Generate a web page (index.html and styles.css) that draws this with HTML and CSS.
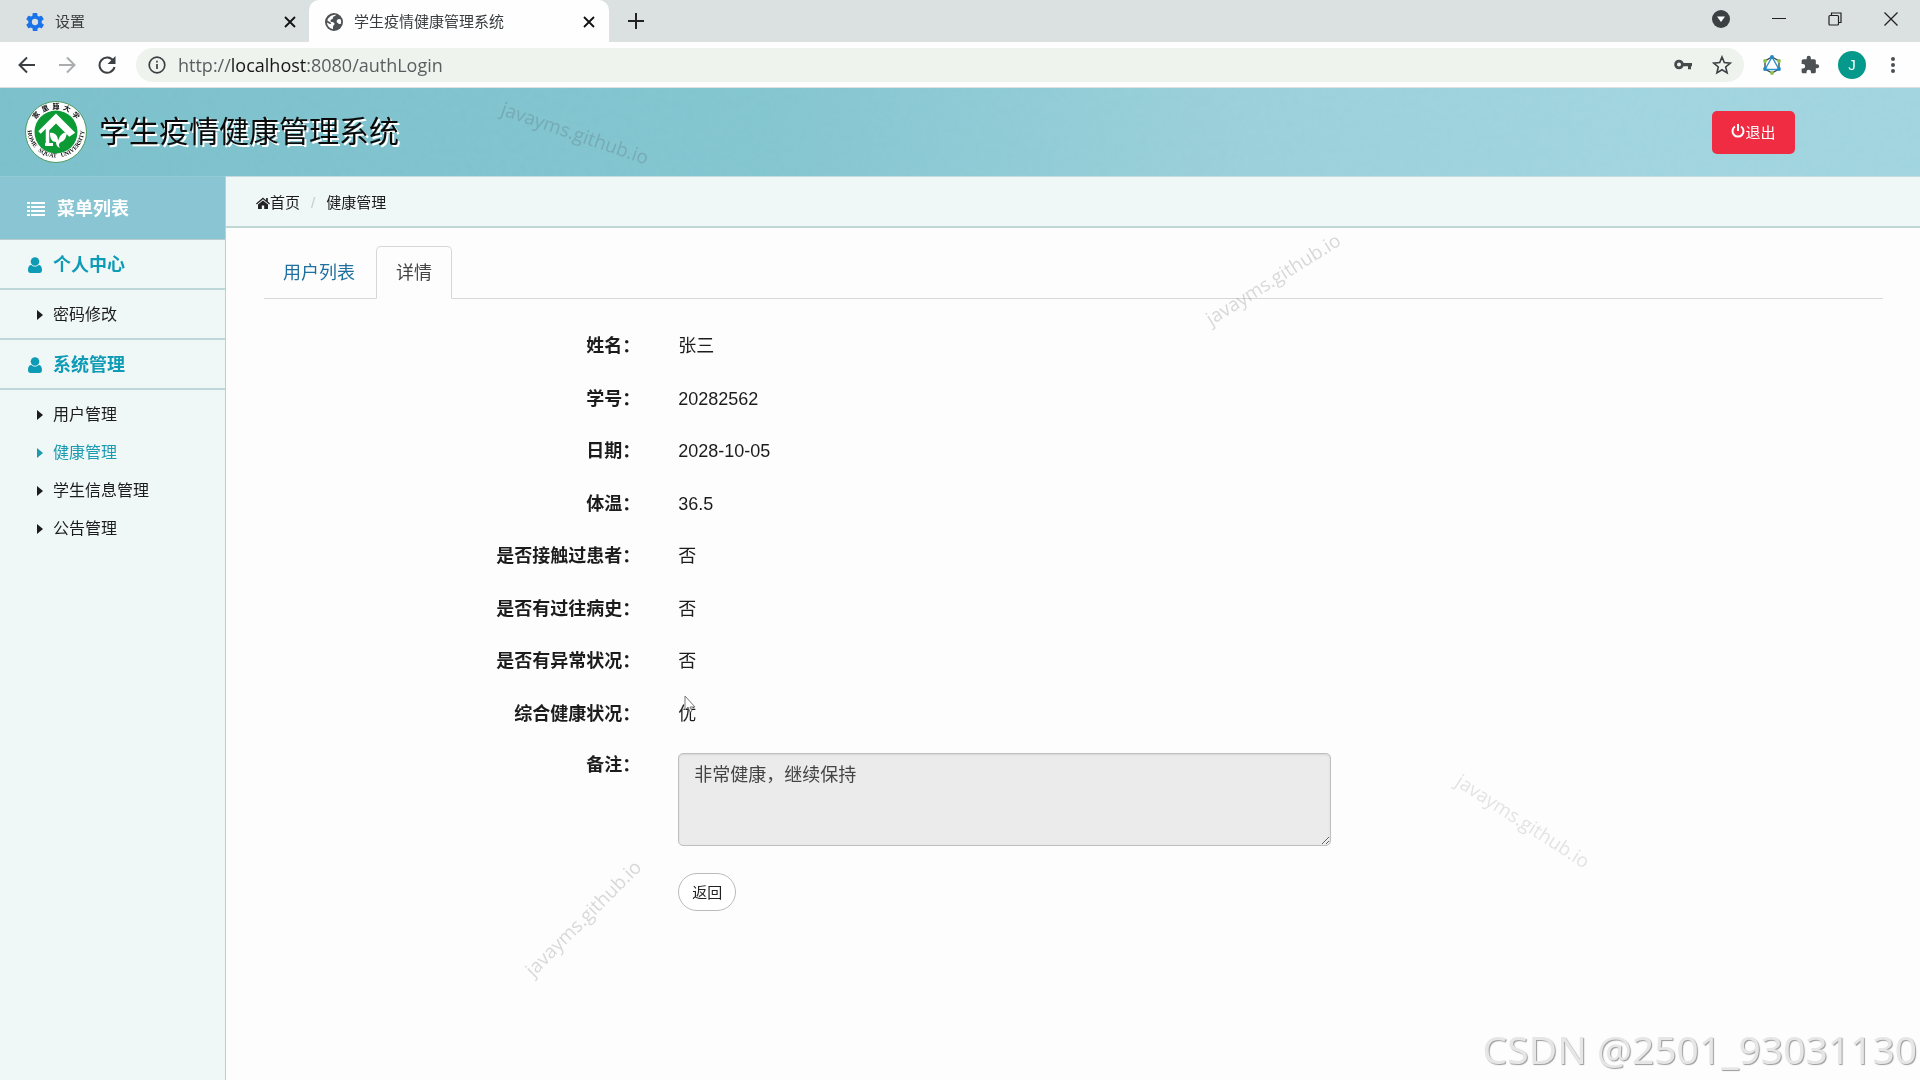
FILE: index.html
```html
<!DOCTYPE html>
<html lang="zh-CN">
<head>
<meta charset="utf-8">
<title>学生疫情健康管理系统</title>
<link rel="stylesheet" href="styles.css">
</head>
<body>
<div class="browser">
  <div class="tabstrip">
    <div class="btab btab-first">
      <svg class="icon18" viewBox="2 2 20 20" fill="#1a73e8"><path d="M19.400 13c0-.3.1-.6.1-1s0-.7-.1-1l2.100-1.700c.2-.1.2-.4.1-.6l-2-3.500c-.1-.2-.4-.3-.6-.2l-2.500 1c-.5-.4-1.100-.7-1.700-1l-.4-2.600c0-.2-.2-.4-.5-.4h-4c-.2 0-.5.2-.5.4L9.200 5c-.6.3-1.200.6-1.700 1L5 5c-.2-.1-.5 0-.6.2l-2 3.500c-.1.2-.1.500.1.600L4.600 11a8 8 0 0 0 0 2l-2.100 1.700c-.2.1-.2.4-.1.6l2 3.500c.1.2.4.3.6.2l2.500-1c.5.4 1.100.7 1.700 1l.4 2.600c0 .2.200.4.500.4h4c.2 0 .5-.2.5-.4l.4-2.600c.6-.3 1.200-.6 1.700-1l2.500 1c.2.100.5 0 .6-.2l2-3.500c.1-.2.100-.5-.1-.6zM12 15.500a3.500 3.500 0 1 1 0-7 3.500 3.500 0 0 1 0 7z"/></svg>
      <span class="btab-title">设置</span>
      <button class="plain" aria-label="关闭标签"><svg class="icon12" viewBox="0 0 12 12" stroke="#111" stroke-width="1.800"><path d="M1 1l10 10M11 1L1 11"/></svg></button>
    </div>
    <div class="btab btab-active">
      <svg class="icon18" viewBox="0 0 18 18"><circle cx="9" cy="9" r="9" fill="#4d5153"/><path d="M11 1.800C10.500 3.500 8 3 8 5c0 1.500-2.500 1-2.500 3 0 1.500 3.500.5 4 2.500.3 1.500-1.500 1.500-1.500 3.500v2C4.500 15.500 2 12.500 2 9.500l3 1.500c1 .5 1.500-1 .5-1.500L2.300 7.500C3.200 4.500 6.500 1.500 11 1.800zM12.500 6.500c1-.8 2.500-.8 3.300 0 .5 1.500.5 3 0 4.500-1.300.3-2.300-.3-3-1-1.300-.5-1.500-2.500-.3-3.500z" fill="#fdfefd"/></svg>
      <span class="btab-title">学生疫情健康管理系统</span>
      <button class="plain" aria-label="关闭标签"><svg class="icon12" viewBox="0 0 12 12" stroke="#111" stroke-width="1.800"><path d="M1 1l10 10M11 1L1 11"/></svg></button>
    </div>
    <button class="plain newtab" aria-label="新标签页"><svg class="icon16" viewBox="0 0 16 16" stroke="#222" stroke-width="2"><path d="M8 0v16M0 8h16"/></svg></button>
    <div class="wincontrols">
      <button class="plain" aria-label="标签搜索"><svg class="icon18" viewBox="0 0 18 18"><circle cx="9" cy="9" r="9" fill="#3b4043"/><path d="M5 6.500h8L9 12z" fill="#fff"/></svg></button>
      <button class="plain" aria-label="最小化"><svg class="icon14" viewBox="0 0 14 14" stroke="#222"><path d="M0 6.500h14"/></svg></button>
      <button class="plain" aria-label="还原"><svg class="icon14" viewBox="0 0 14 14" fill="none" stroke="#222" stroke-width="1.200"><rect x="1" y="3.500" width="9.500" height="9.500" rx="1"/><path d="M3.500 3V1H13v9.500h-2"/></svg></button>
      <button class="plain" aria-label="关闭"><svg class="icon14" viewBox="0 0 14 14" stroke="#222" stroke-width="1.300"><path d="M.5.5l13 13M13.500.5l-13 13"/></svg></button>
    </div>
  </div>
  <div class="toolbar">
    <button class="plain" aria-label="后退"><svg class="icon18" viewBox="0 0 18 18" fill="none" stroke="#3c4043" stroke-width="2"><path d="M17 9H2M9 1.500L1.500 9 9 16.500"/></svg></button>
    <button class="plain" aria-label="前进"><svg class="icon18" viewBox="0 0 18 18" fill="none" stroke="#a9adaf" stroke-width="2"><path d="M1 9h15M9 1.500L16.500 9 9 16.500"/></svg></button>
    <button class="plain" aria-label="刷新"><svg class="icon18" viewBox="0 0 18 18"><path d="M15.500 5A7.600 7.600 0 1 0 16.500 11" fill="none" stroke="#3c4043" stroke-width="2"/><path d="M17.500 0v8h-8z" fill="#3c4043"/></svg></button>
    <div class="omnibox">
      <svg class="icon18" viewBox="0 0 18 18" fill="none" stroke="#3c4043" stroke-width="1.700"><circle cx="9" cy="9" r="7.800"/><path d="M9 8v5M9 4.800v1.800"/></svg>
      <div class="url">http://<span class="host">localhost</span>:8080/authLogin</div>
      <button class="plain" aria-label="密码"><svg class="icon18" viewBox="0 0 18 18"><circle cx="5" cy="8.500" r="3.400" fill="none" stroke="#45494b" stroke-width="2.800"/><path d="M9 7h9v3.200h-1v3h-3v-3H9z" fill="#45494b"/></svg></button>
      <button class="plain" aria-label="收藏"><svg class="icon20" viewBox="0 0 20 20" fill="none" stroke="#3c4043" stroke-width="1.600"><path d="M10 2l2.300 5.600 6 .5-4.600 3.900 1.400 5.900L10 14.800l-5.100 3.100L6.300 12 1.700 8.100l6-.5z"/></svg></button>
    </div>
    <div class="extensions">
      <button class="plain" aria-label="扩展程序"><svg class="icon20" viewBox="0 0 20 20" fill="none"><path d="M10 2l7 4v8l-7 4-7-4V6z" stroke="#3f4a54" stroke-width="1.400"/><path d="M10 2L3 14.500h14z" fill="#fff" stroke="#2a93cf" stroke-width="1.400"/><g fill="#1e88c9"><circle cx="10" cy="2" r="1.900"/><circle cx="3" cy="14" r="1.900"/><circle cx="17" cy="14" r="1.900"/></g><g fill="#8bc34a"><circle cx="3" cy="6" r="1.900"/><circle cx="17" cy="6" r="1.900"/><circle cx="10" cy="18" r="1.900"/></g></svg></button>
      <button class="plain" aria-label="扩展"><svg class="icon20" viewBox="0 0 24 24" fill="#4d5153"><path d="M20.500 11H19V7a2 2 0 0 0-2-2h-4V3.500a2.500 2.500 0 0 0-5 0V5H4a2 2 0 0 0-2 2v3.800h1.500a2.700 2.700 0 0 1 0 5.400H2V20c0 1.100.9 2 2 2h3.800v-1.500a2.700 2.700 0 0 1 5.400 0V22H17a2 2 0 0 0 2-2v-4h1.500a2.500 2.500 0 0 0 0-5z"/></svg></button>
      <button class="avatar" aria-label="账户">J</button>
      <button class="plain" aria-label="菜单"><svg class="icon18" viewBox="0 0 18 18" fill="#4d5153"><circle cx="9" cy="3" r="2"/><circle cx="9" cy="9" r="2"/><circle cx="9" cy="15" r="2"/></svg></button>
    </div>
  </div>
</div>

<header class="header">
  <svg class="grain" aria-hidden="true">
    <filter id="grain"><feTurbulence type="fractalNoise" baseFrequency="0.15" numOctaves="3" seed="4"/><feColorMatrix type="saturate" values="0"/></filter>
    <rect width="100%" height="100%" filter="url(#grain)"/>
  </svg>
  <svg class="logo" viewBox="0 0 62 62">
    <defs>
      <path id="arcTop" d="M7.500 31a23.500 23.500 0 0 1 47 0"/>
      <path id="arcBottom" d="M2.500 28a28.500 28.500 0 0 0 57 0"/>
    </defs>
    <circle cx="31" cy="31" r="30.500" fill="#fff" stroke="#4b9b62" stroke-width="1"/>
    <circle cx="31" cy="31" r="21.500" fill="#0c9a35"/>
    <text class="logo-cn"><textPath href="#arcTop" startOffset="50%" text-anchor="middle">家&#160; 里&#160; 蹲&#160; 大&#160; 学</textPath></text>
    <text class="logo-en"><textPath href="#arcBottom" startOffset="50%" text-anchor="middle">HOME&#160; &#160;SQUAT&#160; &#160;UNIVERSITY</textPath></text>
    <path d="M14.500 31.500L31 15l16.500 16.500-3 2L31 20l-8.500 8.500V43" fill="none" stroke="#fff" stroke-width="3.500"/>
    <path d="M25 32c5-1 8 3 8 8 2-6 4-8 9-9-1 7-3 9-6 10-3 2-2 4-1 6-3-1-4-3-4-6-4 0-6-3-6-9z" fill="#fff"/>
    <path d="M20 43.500h8" stroke="#fff" stroke-width="3"/>
  </svg>
  <h1 class="title">学生疫情健康管理系统</h1>
  <button class="logout"><svg class="icon14" viewBox="0 0 14 14" fill="none" stroke="#fff" stroke-width="2"><path d="M4 2.500a5.500 5.500 0 1 0 6 0M7 0v7"/></svg>退出</button>
</header>

<div class="layout">
  <nav class="sidebar">
    <div class="side-title"><svg class="icon18" viewBox="0 0 18 18" fill="#fff"><path d="M0 2h3v2H0zM4 2h14v2H4zM0 6h3v2H0zM4 6h14v2H4zM0 10h3v2H0zM4 10h14v2H4zM0 14h3v2H0zM4 14h14v2H4z"/></svg>菜单列表</div>
    <h2 class="side-head"><svg class="icon16" viewBox="0 0 16 16" fill="#0e9bb5"><circle cx="8" cy="4.500" r="4.300"/><path d="M1 13c0-3 1-5 3.500-5 2 2 5 2 7 0C14 8 15 10 15 13c0 2-1 3-2.500 3h-9C2 16 1 15 1 13z"/></svg>个人中心</h2>
    <ul class="side-list side-list-ruled">
      <li><a href="#password">密码修改</a></li>
    </ul>
    <h2 class="side-head"><svg class="icon16" viewBox="0 0 16 16" fill="#0e9bb5"><circle cx="8" cy="4.500" r="4.300"/><path d="M1 13c0-3 1-5 3.500-5 2 2 5 2 7 0C14 8 15 10 15 13c0 2-1 3-2.500 3h-9C2 16 1 15 1 13z"/></svg>系统管理</h2>
    <ul class="side-list">
      <li><a href="#users">用户管理</a></li>
      <li><a class="current" href="#health">健康管理</a></li>
      <li><a href="#students">学生信息管理</a></li>
      <li><a href="#notices">公告管理</a></li>
    </ul>
  </nav>

  <main class="main">
    <div class="breadcrumb">
      <a href="#home"><svg class="icon14" viewBox="0 0 14 14" fill="#222"><path d="M7 1.500L0 7.500l.8 1L7 3.300l6.200 5.200.8-1-2.200-1.900V2h-1.700v2.200z"/><path d="M7 4.400L2 8.500V13h3.800V9.500h2.400V13H12V8.500z"/></svg>首页</a>
      <span class="slash">/</span>
      <a href="#health">健康管理</a>
    </div>
    <div class="content">
      <div class="tabs">
        <a class="tab" href="#list">用户列表</a>
        <a class="tab tab-active" href="#detail">详情</a>
      </div>
      <form class="form">
        <dl class="fields">
          <div class="row"><dt>姓名：</dt><dd>张三</dd></div>
          <div class="row"><dt>学号：</dt><dd>20282562</dd></div>
          <div class="row"><dt>日期：</dt><dd>2028-10-05</dd></div>
          <div class="row"><dt>体温：</dt><dd>36.5</dd></div>
          <div class="row"><dt>是否接触过患者：</dt><dd>否</dd></div>
          <div class="row"><dt>是否有过往病史：</dt><dd>否</dd></div>
          <div class="row"><dt>是否有异常状况：</dt><dd>否</dd></div>
          <div class="row"><dt>综合健康状况：</dt><dd>优</dd></div>
        </dl>
        <div class="row row-note">
          <label class="label" for="note">备注：</label>
          <div class="control"><textarea id="note" class="note" readonly>非常健康，继续保持</textarea></div>
        </div>
        <div class="row row-actions">
          <div class="label"></div>
          <div class="control"><button type="button" class="back">返回</button></div>
        </div>
      </form>
    </div>
  </main>
</div>

<div class="overlay">
  <span class="mark mark-a">javayms.github.io</span>
  <span class="mark mark-b">javayms.github.io</span>
  <span class="mark mark-c">javayms.github.io</span>
  <span class="mark mark-d">javayms.github.io</span>
  <svg class="pointer" viewBox="0 0 12 18"><path d="M1 1v14l3-3 2 5 2-1-2-4h5z" fill="#fff" stroke="#777"/></svg>
  <span class="credit">CSDN @2501_93031130</span>
</div>
</body>
</html>
```
FILE: styles.css
```css
* { box-sizing: border-box; }
body {
  margin: 0;
  min-height: 100vh;
  display: flex;
  flex-direction: column;
  position: relative;
  overflow-x: hidden;
  background: #fdfdfd;
  color: #1c1c1c;
  font: 16px/24px "Liberation Sans", "Noto Sans CJK SC", sans-serif;
}
h1, h2, ul, dl, dd { margin: 0; padding: 0; }
ul { list-style: none; }
a { color: inherit; text-decoration: none; }
svg { display: block; flex: none; }
button { font-family: inherit; }
.plain { padding: 0; border: 0; background: none; }
.icon12 { width: 12px; height: 12px; }
.icon14 { width: 14px; height: 14px; }
.icon16 { width: 16px; height: 16px; }
.icon18 { width: 18px; height: 18px; }
.icon20 { width: 20px; height: 20px; }

/* Browser frame */
.tabstrip { display: flex; height: 42px; background: #dbe0e1; }
.btab { display: flex; align-items: center; gap: 11px; width: 300px; padding: 1px 14px 0 16px; }
.btab-first { width: 309px; padding-left: 26px; padding-right: 13px; }
.btab-active { background: #fdfefd; border-radius: 10px 10px 0 0; }
.btab-title { flex: 1; font-size: 15px; color: #3a3d3f; }
.newtab { margin-left: 19px; }
.wincontrols { display: flex; align-items: center; gap: 42px; margin-left: auto; padding: 0 22px 4px 0; }
.toolbar {
  display: flex;
  align-items: center;
  gap: 22px;
  height: 46px;
  padding: 0 18px;
  background: #fdfefd;
  border-bottom: 1px solid #dde0df;
}
.omnibox {
  flex: 1;
  display: flex;
  align-items: center;
  gap: 20px;
  height: 34px;
  margin-left: -2px;
  padding: 0 12px;
  border-radius: 17px;
  background: #eef3ee;
}
.url { flex: 1; margin-left: -8px; font: 18px/24px "Open Sans", sans-serif; color: #5a5e60; }
.host { color: #161616; }
.extensions { display: flex; align-items: center; gap: 18px; margin-left: -4px; }
.avatar {
  width: 28px;
  height: 28px;
  padding: 0;
  border: 0;
  border-radius: 50%;
  background: #05998c;
  color: #fff;
  font-size: 15px;
}

/* Page header */
.header {
  position: relative;
  display: flex;
  align-items: center;
  height: 88px;
  padding: 0 125px 0 25px;
  background: linear-gradient(90deg, #7bc0cb, #83c5d0 40%, #9bd0da 65%, #a0d4df 85%, #a0d4df);
}
.grain { position: absolute; inset: 0; width: 100%; height: 100%; opacity: .12; mix-blend-mode: soft-light; }
.logo, .title, .logout { position: relative; }
.logo { width: 62px; height: 62px; }
.logo-cn { font: bold 7px "Noto Sans CJK SC", sans-serif; fill: #111; }
.logo-en { font: bold 6px "Liberation Serif", serif; fill: #111; }
.title {
  flex: 1;
  margin-left: 12px;
  font-size: 30px;
  line-height: 40px;
  font-weight: 400;
  color: #0b0b0b;
  text-shadow: 2px 2px 0 #fff;
}
.logout {
  display: flex;
  align-items: center;
  justify-content: center;
  width: 83px;
  height: 43px;
  padding: 0 0 2px;
  border: 0;
  border-radius: 5px;
  background: #f02c43;
  color: #fff;
  font-size: 15px;
}

/* Sidebar */
.layout { flex: 1; display: flex; }
.sidebar { width: 226px; flex: none; background: #f0f7f7; border-right: 1px solid #b5d3d3; }
.side-title {
  display: flex;
  align-items: center;
  gap: 12px;
  height: 64px;
  padding: 2px 0 0 27px;
  background: #89c5d2;
  border-top: 1px solid #94cbd4;
  border-bottom: 1px solid #b8cdd0;
  color: #fff;
  font-size: 18px;
  font-weight: 700;
}
.side-head {
  display: flex;
  align-items: center;
  gap: 10px;
  height: 50px;
  padding: 2px 0 0 27px;
  border-bottom: 2px solid #bdd8d9;
  color: #0e9bb5;
  font-size: 18px;
  font-weight: 700;
}
.side-list { padding: 6px 0 4px; }
.side-list-ruled { border-bottom: 2px solid #bdd8d9; }
.side-list a { display: flex; align-items: center; gap: 10px; height: 38px; padding-left: 37px; }
.side-list a::before {
  content: "";
  border: 5px solid transparent;
  border-left: 6px solid currentColor;
  border-right: 0;
}
.side-list .current { color: #1b9bb0; }

/* Content */
.main { flex: 1; min-width: 0; }
.breadcrumb {
  display: flex;
  align-items: center;
  gap: 11px;
  height: 52px;
  padding: 2px 0 0 30px;
  border-top: 1px solid #c7dcde;
  border-bottom: 2px solid #bfd8d6;
  background: #f0f7f7;
  font-size: 15px;
}
.breadcrumb a { display: flex; align-items: center; }
.slash { color: #c4cccc; }
.content { padding: 18px 37px 18px 38px; }
.tabs { display: flex; gap: 2px; height: 53px; border-bottom: 1px solid #d5d8d8; font-size: 18px; }
.tab { height: 53px; padding: 15px 19px; line-height: 24px; color: #1f6f9f; }
.tab-active { border: 1px solid #d5d8d8; border-bottom-color: #fdfdfd; border-radius: 5px 5px 0 0; padding: 14px 19px; background: #fdfdfd; color: #444; }
.form { margin: 21px -19px 0; font-size: 18px; }
.fields { display: flex; flex-direction: column; min-height: 420px; }
.row { display: flex; }
.fields .row { flex: 1; align-items: center; }
dt, .label { width: 25%; padding: 0 19px; text-align: right; font-weight: 700; }
dd, .control { width: calc(100% * 5 / 12); padding: 0 19px; }
.row-note { padding-top: 13px; }
.control { display: flex; }
.note {
  flex: 1;
  height: 93px;
  padding: 9px 15px;
  border: 1px solid #bfbfbf;
  border-radius: 5px;
  background: #ebebeb;
  box-shadow: inset 0 1px 2px #d5d5d5;
  color: #444;
  font: inherit;
}
.row-actions { padding-top: 27px; }
.back {
  width: 58px;
  height: 38px;
  padding: 0 0 2px;
  border: 1px solid #bbb;
  border-radius: 19px;
  background: #fff;
  color: #222;
  font-size: 15px;
}

/* Marks lying over the page */
.overlay { position: absolute; inset: 0; pointer-events: none; overflow: hidden; }
.mark { position: absolute; width: 180px; text-align: center; font: 19px/24px "Open Sans", sans-serif; color: rgba(70, 70, 70, .2); }
.mark-a { left: 485px; top: 121px; transform: rotate(19deg); }
.mark-b { left: 1183px; top: 267px; transform: rotate(-32deg); }
.mark-c { left: 493px; top: 906px; transform: rotate(-45deg); }
.mark-d { left: 1433px; top: 809px; transform: rotate(33deg); color: rgba(70, 70, 70, .14); }
.pointer { position: absolute; left: 684px; top: 695px; width: 12px; height: 18px; }
.credit {
  position: absolute;
  right: 3px;
  bottom: 7px;
  font: 39px/48px "Noto Sans", sans-serif;
  color: #e6e6e6;
  text-shadow: 1px 1px 1px #999;
}
```
